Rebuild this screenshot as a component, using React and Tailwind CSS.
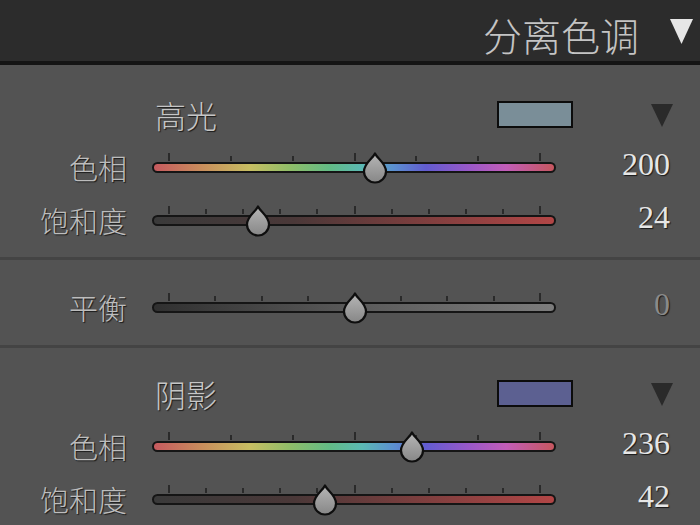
import React from 'react';

const HUE_TRACK =
  'bg-[linear-gradient(to_right,#c65a5f,#c98e5c_12%,#c7be62_24%,#8fbd68_34%,#62bb86_44%,#5bb9b4_52%,#5b8fd0_60%,#625cd0_68%,#9a58c8_79%,#c25db8_88%,#c6575f)]';
const SAT_TRACK = 'bg-[linear-gradient(to_right,#3a3a3a,#4a3838_35%,#8a4040_75%,#b24646)]';
const BAL_TRACK = 'bg-[linear-gradient(to_right,#303030,#5a5a5a_50%,#7c7c7c)]';

const RANGE_START = 17;
const RANGE_WIDTH = 371;

const Thumb = ({ left }) => (
  <svg
    width="30"
    height="32"
    viewBox="0 0 30 32"
    className="absolute top-[11px]"
    style={{ left: left - 15 }}
  >
    <defs>
      <linearGradient id="thumbFill" x1="0" y1="0" x2="0" y2="1">
        <stop offset="0" stopColor="#b6b6b6" />
        <stop offset="1" stopColor="#878787" />
      </linearGradient>
    </defs>
    <path
      d="M15 1.5 C17.5 7 26 11 26 19.5 A11 11 0 0 1 4 19.5 C4 11 12.5 7 15 1.5 Z"
      fill="url(#thumbFill)"
      stroke="#0e0e0e"
      strokeWidth="2.2"
      strokeLinejoin="round"
    />
  </svg>
);

const Slider = ({ value, min, max, ticks, track }) => {
  const pos = RANGE_START + ((value - min) / (max - min)) * RANGE_WIDTH;
  const mid = (ticks - 1) / 2;
  return (
    <div className="relative w-[404px] h-[53px] shrink-0">
      {Array.from({ length: ticks }).map((_, i) => {
        const major = i === 0 || i === ticks - 1 || i === mid;
        return (
          <div
            key={i}
            className={
              major
                ? 'absolute top-[12px] h-[8px] w-[2px] bg-[#2a2a2a]'
                : 'absolute top-[15px] h-[5px] w-[2px] bg-[#2a2a2a]'
            }
            style={{ left: RANGE_START + (i * RANGE_WIDTH) / (ticks - 1) - 1 }}
          />
        );
      })}
      <div className={`absolute left-0 right-0 top-[21px] h-[11px] rounded-full border-2 border-[#151515] ${track}`} />
      <Thumb left={pos} />
    </div>
  );
};

const Row = ({ label, value, dim, children }) => (
  <div className="flex items-center h-[53px]">
    <div className="w-[127px] text-right text-[29px] font-light leading-none text-[#bdbdbd] [text-shadow:1px_1px_1px_rgba(0,0,0,0.7)]">
      {label}
    </div>
    <div className="w-[25px] shrink-0" />
    {children}
    <div
      className={`w-[114px] pb-[8px] text-right font-['Liberation_Serif',serif] text-[32px] leading-none [text-shadow:1px_1px_1px_rgba(0,0,0,0.7)] ${
        dim ? 'text-[#8a8a8a]' : 'text-[#e6e6e6]'
      }`}
    >
      {value}
    </div>
  </div>
);

const Caret = ({ className }) => (
  <svg width="24" height="24" viewBox="0 0 24 24" className={className}>
    <path d="M1 1 H23 L12 24 Z" fill="currentColor" />
  </svg>
);

const GroupHeader = ({ title, swatch }) => (
  <div className="flex items-center h-[53px]">
    <div className="w-[497px] pl-[155px] text-[31px] font-light leading-none text-[#c6c6c6] [text-shadow:1px_1px_1px_rgba(0,0,0,0.7)]">
      {title}
    </div>
    <div className={`w-[76px] h-[27px] border-2 border-[#0c0c0c] ${swatch}`} />
    <div className="w-[77px]" />
    <Caret className="text-[#2a2a2a]" />
  </div>
);

export default function App() {
  return (
    <div className="w-[700px] h-[525px] overflow-hidden bg-[#535353] font-['Noto_Sans_CJK_SC',sans-serif]">
      {/* panel header */}
      <div className="flex items-center justify-end h-[61px] bg-[#2c2c2c] pr-[7px]">
        <span className="text-[39px] font-light leading-none text-[#c4c4c4] mr-[31px] mt-[8px]">分离色调</span>
        <svg width="23" height="25" viewBox="0 0 23 25" className="text-[#e6e6e6] mt-[2px]">
          <path d="M0 0 H23 L11.5 25 Z" fill="currentColor" />
        </svg>
      </div>
      <div className="h-[4px] bg-[#141414]" />

      {/* highlights */}
      <div className="pt-[23px] pb-[10px]">
        <GroupHeader title="高光" swatch="bg-[#7a8e98]" />
        <Row label="色相" value="200">
          <Slider value={200} min={0} max={360} ticks={7} track={HUE_TRACK} />
        </Row>
        <Row label="饱和度" value="24">
          <Slider value={24} min={0} max={100} ticks={11} track={SAT_TRACK} />
        </Row>
      </div>
      <div className="h-[3px] bg-[#444444]" />

      {/* balance */}
      <div className="pt-[21px] pb-[11px]">
        <Row label="平衡" value="0" dim>
          <Slider value={0} min={-100} max={100} ticks={9} track={BAL_TRACK} />
        </Row>
      </div>
      <div className="h-[3px] bg-[#444444]" />

      {/* shadows */}
      <div className="pt-[19px]">
        <GroupHeader title="阴影" swatch="bg-[#5c6091]" />
        <Row label="色相" value="236">
          <Slider value={236} min={0} max={360} ticks={7} track={HUE_TRACK} />
        </Row>
        <Row label="饱和度" value="42">
          <Slider value={42} min={0} max={100} ticks={11} track={SAT_TRACK} />
        </Row>
      </div>
    </div>
  );
}
